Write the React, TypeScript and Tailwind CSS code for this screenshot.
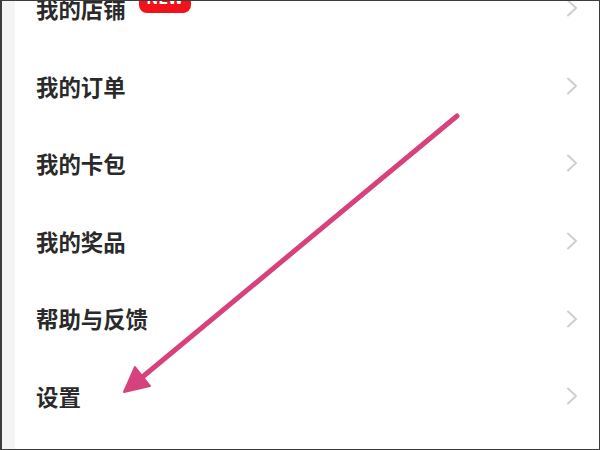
import type { ReactNode } from "react";

const rows: { label: string; badge?: boolean }[] = [
  { label: "我的店铺", badge: true },
  { label: "我的订单" },
  { label: "我的卡包" },
  { label: "我的奖品" },
  { label: "帮助与反馈" },
  { label: "设置" },
];

function Chevron() {
  return (
    <svg width="12" height="18" viewBox="0 0 12 18" className="shrink-0">
      <polyline
        points="2,1.5 10,9 2,16.5"
        fill="none"
        stroke="#cfcfcf"
        strokeWidth="2"
        strokeLinecap="round"
        strokeLinejoin="round"
      />
    </svg>
  );
}

function MenuRow({ label, badge }: { label: string; badge?: boolean }) {
  let tag: ReactNode = null;
  if (badge) {
    tag = (
      <span className="absolute left-[calc(100%+13px)] top-[-8px] flex h-[24px] w-[52px] items-center justify-center rounded-[8px] rounded-tl-[3px] bg-[#f2121c] pb-[8px] text-[16px] font-bold leading-none text-white">
        NEW
      </span>
    );
  }

  return (
    <div className="flex h-[77.6px] items-center justify-between pl-[21px] pr-[21px]">
      <span className="relative text-[22.4px] font-bold leading-none text-[#2a2a2a]">
        {label}
        {tag}
      </span>
      <Chevron />
    </div>
  );
}

function Arrow() {
  return (
    <svg
      width="600"
      height="450"
      viewBox="0 0 600 450"
      className="pointer-events-none absolute left-0 top-0"
    >
      <line
        x1="455"
        y1="115"
        x2="138"
        y2="378"
        stroke="#d8427c"
        strokeWidth="5"
        strokeLinecap="round"
      />
      <polygon points="122,391 148,385 133,366" fill="#d8427c" stroke="#d8427c" strokeWidth="2" strokeLinejoin="round" />
    </svg>
  );
}

export default function App() {
  return (
    <div
      className="relative h-[450px] w-[600px] overflow-hidden border border-l-2 border-[#3c3c3c] bg-white"
      style={{ fontFamily: '"Noto Sans CJK SC", "Noto Sans", sans-serif' }}
    >
      <div className="flex h-full">
        <div className="w-[13px] shrink-0 bg-[#f4f4f4]" />
        <div className="mt-[-31.5px] flex-1">
          {rows.map((row) => (
            <MenuRow key={row.label} label={row.label} badge={row.badge} />
          ))}
        </div>
      </div>
      <Arrow />
    </div>
  );
}
